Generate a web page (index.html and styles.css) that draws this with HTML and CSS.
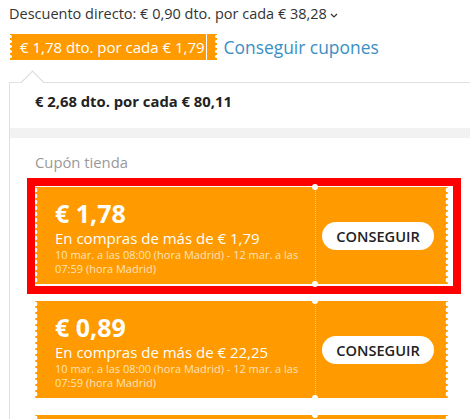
FILE: index.html
```html
<html>

<head>
    <title>Cupones</title>
    <link rel="stylesheet" href="styles.css">
</head>

<body>
    <div class="direct">
        Descuento directo: € 0,90 dto. por cada € 38,28
        <svg class="chev" width="8" height="5" viewBox="0 0 8 5"><path d="M1 1l3 3 3-3" fill="none" stroke="#333" stroke-width="1.2"/></svg>
    </div>

    <div class="tag-row">
        <span class="tag"><span class="tag-main">€ 1,78 dto. por cada € 1,79</span><span class="tag-stub"></span></span>
        <a class="get-link">Conseguir cupones</a>
    </div>

    <div class="popup">
        <div class="popup-head">€ 2,68 dto. por cada € 80,11</div>
        <div class="popup-band"></div>
        <div class="popup-body">
            <div class="section-title">Cupón tienda</div>

            <div class="coupon-list">
                <div class="highlight">
                    <div class="coupon">
                        <div class="coupon-info">
                            <div class="coupon-price">€ 1,78</div>
                            <div class="coupon-cond">En compras de más de € 1,79</div>
                            <div class="coupon-date">10 mar. a las 08:00 (hora Madrid) - 12 mar. a las 07:59 (hora Madrid)</div>
                        </div>
                        <div class="coupon-action"><button class="get-btn">CONSEGUIR</button></div>
                    </div>
                </div>

                <div class="coupon">
                    <div class="coupon-info">
                        <div class="coupon-price">€ 0,89</div>
                        <div class="coupon-cond">En compras de más de € 22,25</div>
                        <div class="coupon-date">10 mar. a las 08:00 (hora Madrid) - 12 mar. a las 07:59 (hora Madrid)</div>
                    </div>
                    <div class="coupon-action"><button class="get-btn">CONSEGUIR</button></div>
                </div>

                <div class="coupon">
                    <div class="coupon-info">
                        <div class="coupon-price">€ 0,45</div>
                        <div class="coupon-cond">En compras de más de € 11,13</div>
                        <div class="coupon-date">10 mar. a las 08:00 (hora Madrid) - 12 mar. a las 07:59 (hora Madrid)</div>
                    </div>
                    <div class="coupon-action"><button class="get-btn">CONSEGUIR</button></div>
                </div>
            </div>
        </div>
    </div>
</body>

</html>
```

FILE: styles.css
```css
body {
    margin: 0;
    padding: 4px 9px;
    overflow: hidden;
    background-color: #fff;
    font-family: "Open Sans", "Liberation Sans", sans-serif;
    color: #333;
}

.direct {
    font-size: 14.5px;
    line-height: 20px;
}

.chev {
    vertical-align: middle;
    margin-left: -1px;
}

.tag-row {
    margin-top: 10px;
    display: flex;
    align-items: center;
    height: 26px;
}

.tag {
    display: flex;
    height: 26px;
    margin-left: 1px;
}

.tag-main,
.tag-stub {
    position: relative;
    background-color: #ff9a00;
    color: #fff;
    font-size: 15px;
    line-height: 26px;
}

.tag-main {
    padding: 0 1px 0 10px;
    border-right: 1px solid #fff;
}

.tag-stub {
    width: 10px;
}

/* serrated edges */
.tag-main::before,
.tag-stub::after {
    content: "";
    position: absolute;
    top: 0;
    bottom: 0;
    width: 3px;
    background: radial-gradient(circle at 0 2.5px, #fff 1.6px, transparent 2px) 0 0 / 3px 5px repeat-y;
}

.tag-main::before {
    left: 0;
}

.tag-stub::after {
    right: 0;
    transform: scaleX(-1);
}

.get-link {
    margin-left: 7px;
    font-size: 17.4px;
    color: #3a8fc4;
}

.popup {
    position: relative;
    margin-top: 22px;
    width: 500px;
    border: 1px solid #e0e0e0;
    background-color: #fff;
}

.popup::before {
    content: "";
    position: absolute;
    top: -9px;
    left: 14px;
    width: 16px;
    height: 16px;
    background-color: #fff;
    border-top: 1px solid #d8d8d8;
    border-left: 1px solid #d8d8d8;
    transform: rotate(45deg);
}

.popup-head {
    padding: 8px 25px 17px;
    font-size: 14.8px;
    line-height: 20px;
    font-weight: bold;
    color: #222;
}

.popup-band {
    height: 10px;
    background-color: #f2f2f2;
}

.popup-body {
    padding: 14px 25px 0;
}

.section-title {
    font-size: 14.8px;
    line-height: 20px;
    color: #999;
    margin-bottom: 15px;
}

.coupon-list {
    display: flex;
    flex-direction: column;
    gap: 17px;
    width: 413px;
}

.highlight {
    border: 8px solid #f00;
    padding: 1px 5px 2px 0;
    margin: -9px -13px -10px -8px;
}

.coupon {
    position: relative;
    display: flex;
    background-color: #ff9a00;
    color: #fff;
}

.coupon::before,
.coupon::after {
    content: "";
    position: absolute;
    top: 0;
    bottom: 0;
    width: 4px;
    background: radial-gradient(circle at 0 3px, #fff 2.2px, transparent 2.7px) 0 0 / 4px 6px repeat-y;
}

.coupon::before {
    left: 0;
}

.coupon::after {
    right: 0;
    transform: scaleX(-1);
}

.coupon-info {
    flex: 1;
    padding: 11px 3px 8px 20px;
}

.coupon-price {
    font-size: 25px;
    line-height: 30px;
    font-weight: bold;
}

.coupon-cond {
    font-size: 15px;
    line-height: 20px;
}

.coupon-date {
    font-size: 11px;
    line-height: 14px;
    color: #ffe3bb;
}

.coupon-action {
    position: relative;
    width: 126px;
    display: flex;
    align-items: center;
    padding-left: 6px;
    border-left: 1px dotted #ffc878;
}

.coupon-action::before,
.coupon-action::after {
    content: "";
    position: absolute;
    left: -4px;
    width: 6px;
    height: 6px;
    border-radius: 50%;
    background-color: #fff;
}

.coupon-action::before {
    top: -3px;
}

.coupon-action::after {
    bottom: -3px;
}

.get-btn {
    width: 112px;
    height: 28px;
    border: none;
    border-radius: 14px;
    background-color: #fff;
    color: #222;
    font-family: "Open Sans", "Liberation Sans", sans-serif;
    font-size: 14.6px;
    font-weight: 600;
    padding: 0;
}
```
